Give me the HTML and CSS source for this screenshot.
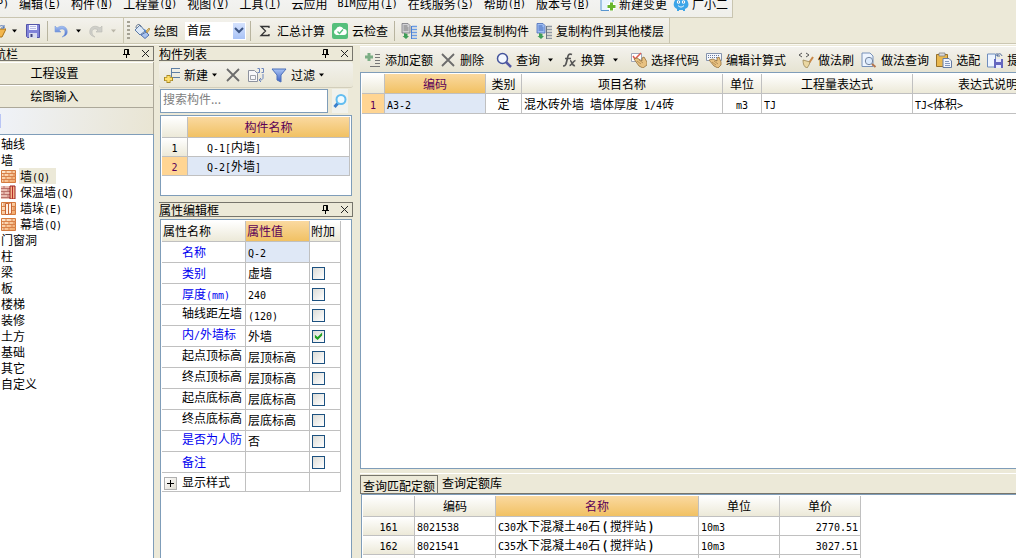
FILE: index.html
```html
<!DOCTYPE html>
<html lang="zh-CN">
<head>
<meta charset="utf-8">
<title>构件定义</title>
<link rel="stylesheet" href="styles.css">
</head>
<body>
<svg class="defs" aria-hidden="true">
  <defs>
    <linearGradient id="gBlue" x1="0" y1="0" x2="0" y2="1"><stop offset="0" stop-color="#a9c4f5"/><stop offset="1" stop-color="#3d62c4"/></linearGradient>
    <linearGradient id="gBrick" x1="0" y1="0" x2="1" y2="1"><stop offset="0" stop-color="#fff0dc"/><stop offset="1" stop-color="#f2a563"/></linearGradient>
    <symbol id="caret" viewBox="0 0 7 4"><path d="M1 0.500h5L3.500 3.500z" fill="currentColor"/></symbol>
    <symbol id="folder" viewBox="9 0 6 16"><path d="M0 14L5 6h10l-4 8z" fill="#f3b64c" stroke="#a87216"/><path d="M8 4c2-2 4-2 5 1m0-3v3h-3" fill="none" stroke="#4f74b8"/></symbol>
    <symbol id="save" viewBox="0 0 16 16"><path d="M1.500 1.500h13v13h-12l-1-1z" fill="#8183d8" stroke="#5355a8"/><path d="M4 2h8v5H4z" fill="#f4f5ff"/><path d="M5 3.500h6M5 5.500h6" stroke="#b7bbe2"/><path d="M4 10h8v5H4z" fill="#d9dcf0"/><path d="M5.500 11h2v3h-2z" fill="#40427c"/></symbol>
    <symbol id="undo" viewBox="0 0 14 16"><path d="M1 3v6h6L5 7c3-2 6-1 6 2 0 2-1 4-3 5 4-1 6-3 5-7-1-4-6-5-10-2z" fill="url(#gBlue)" stroke="#7d9fdc" stroke-width=".6"/></symbol>
    <symbol id="redo" viewBox="0 0 14 16"><path d="M13 3v6H7l2-2C6 5 3 6 3 9c0 2 1 4 3 5-4-1-6-3-5-7 1-4 6-5 10-2z" fill="#cfcfc9" stroke="#b8b8b2" stroke-width=".6"/></symbol>
    <symbol id="paint" viewBox="0 0 16 16"><path d="M1 7l5-5 5 6-5 4z" fill="#dce8f6" stroke="#5b7ba8"/><path d="M2 5c0-4 4-5 5-1" fill="none" stroke="#63748e"/><path d="M10 7c2 0 2 3 2 5" stroke="#4a83d0" stroke-width="1.500" fill="none"/><path d="M7 12l5-3 3 3-4 3.500z" fill="#a8c3ee" stroke="#5272b0"/><path d="M12 8l3-3 1 1-3 4z" fill="#e4bd65" stroke="#9a7c37" stroke-width=".6"/></symbol>
    <symbol id="sigma" viewBox="0 0 16 16"><path d="M12 5V3.500H4L8.500 8 4 12.500h8V11" fill="none" stroke="#333" stroke-width="1.300"/></symbol>
    <symbol id="cloud" viewBox="0 0 16 16"><rect width="16" height="16" rx="2" fill="#55bf7b"/><path d="M4.500 12a3 3 0 0 1-.5-5.800A4 4 0 0 1 11.500 6a3 3 0 0 1 .5 6z" fill="#fff"/><path d="M5.500 8.500l2 2 3.500-4" stroke="#55bf7b" stroke-width="1.300" fill="none"/></symbol>
    <symbol id="copyfrom" viewBox="0 0 16 16"><path d="M1 .5h6l2 2V10H1z" fill="#d3d3d6" stroke="#77777d" stroke-width=".8"/><path d="M2.500 3h4m-4 2h5m-5 2h5" stroke="#777"/><path d="M10.500 3v13" stroke="#4b7fd4"/><path d="M11 3.500h5m-5 3h5m-5 3h5m-5 3h5m-5 3h5" stroke="#6b9ce4" stroke-width="1.500"/><path d="M3 10v3H1.500L5 16l3-3H6.500v-2z" fill="#3f9e58"/></symbol>
    <symbol id="copyto" viewBox="0 0 16 16"><path d="M1 .5h6l2 2V10H1z" fill="#9ebdf2" stroke="#496cb8" stroke-width=".8"/><path d="M2.500 3h4m-4 2h5m-5 2h5" stroke="#4168ba"/><path d="M10.500 3v13" stroke="#6c7580"/><path d="M11 3.500h5m-5 3h5m-5 3h5m-5 3h5m-5 3h5" stroke="#8f98a3" stroke-width="1.500"/><path d="M3 10v3H1.500L5 16l3-3H6.500v-2z" fill="#3f9e58"/></symbol>
    <symbol id="newdoc" viewBox="0 0 16 16"><path d="M1 0h12v14.500H1z" fill="#e8f3fd" stroke="#5996cf"/><path d="M7 10.500h9M11.500 6v9" stroke="#fff" stroke-width="5"/><path d="M7.500 10.500h8M11.500 6.500v8" stroke="#67b52d" stroke-width="3"/></symbol>
    <symbol id="mascot" viewBox="0 0 16 16"><path d="M2 4L1 0l4 2h6l4-2-1 4c3 5 1 8-2 9v2h-2v-1H6v1H4v-2C0 11 0 8 2 4z" fill="#3da5e8"/><circle cx="5.500" cy="6" r="1.700" fill="#fff"/><circle cx="10.500" cy="6" r="1.700" fill="#fff"/><path d="M5.500 5.500v1m5-1v1" stroke="#124b80"/><path d="M5 9.500c2 2 4 2 6 0" stroke="#fff" fill="none"/></symbol>
    <symbol id="addrow" viewBox="0 0 16 16"><path d="M0 5h8M4 1v8" stroke="#7cae86" stroke-width="3"/><path d="M10 2.500h5m-5 3h5m-5 3h5m-5 3h5m-10 3h10" stroke="#777"/></symbol>
    <symbol id="cross" viewBox="0 0 16 16"><path d="M2 2l12 12M14 2L2 14" stroke="#6c6c6c" stroke-width="1.800"/></symbol>
    <symbol id="find" viewBox="0 0 16 16"><circle cx="6.500" cy="6.500" r="5" fill="#f4f8ff" stroke="#44549c" stroke-width="1.500"/><path d="M10 10l5 5" stroke="#5358a4" stroke-width="2.500"/></symbol>
    <symbol id="fx" viewBox="0 0 16 16"><path d="M11 2.500C7 1 7 4 6 8s-1 6-4 6M4 6.500h6M9 8.500c2 0 2 6 5 5M14.500 8.500c-2 0-4 5-6 5" fill="none" stroke="#555" stroke-width="1.700"/></symbol>
    <symbol id="pick" viewBox="0 0 16 16"><path d="M.5 1.500h10v8H.5z" fill="#fff" stroke="#9fa6b8"/><path d="M2 4l2 3 6-6" fill="none" stroke="#df5c50" stroke-width="1.500"/><path d="M3 7l3-1 5 3V6l2-1 3 5v3l-4 3-4-2z" fill="#e8c181" stroke="#94713e" stroke-width=".8"/><path d="M6 9l4 3M8 8l4 3" stroke="#94713e" stroke-width=".6"/></symbol>
    <symbol id="edit" viewBox="0 0 16 16"><path d="M.5 1.500h15v7H.5z" fill="#f5f8fd" stroke="#8593ad"/><path d="M2 3.500h12M2 5.500h12" stroke="#6879a0" stroke-dasharray="1 1"/><path d="M3 8l4-1 4 2V6l2-1 2 5v3l-3 3-4-2z" fill="#e8c181" stroke="#94713e" stroke-width=".8"/><path d="M6 10l4 3M8 9l4 3" stroke="#94713e" stroke-width=".6"/></symbol>
    <symbol id="brush" viewBox="0 0 16 16"><path d="M4 1L1 3l3 2m4-4l3 2-3 2" fill="none" stroke="#555"/><path d="M15 5l-4 6" stroke="#c98747" stroke-width="2"/><path d="M5 8l7 2-1 3-2 3c-3-1-4-4-4-8z" fill="#ead7a2" stroke="#9b8656" stroke-width=".8"/></symbol>
    <symbol id="docfind" viewBox="0 0 16 16"><path d="M1 1h8l3 3v10.500H1z" fill="#eef5ff" stroke="#7892ba"/><circle cx="8" cy="9" r="3.700" fill="#dceafc" stroke="#74859f"/><path d="M11 12l3.500 3" stroke="#b4744b" stroke-width="2"/></symbol>
    <symbol id="paste" viewBox="0 0 16 16"><path d="M.5 2.500h11v12H.5z" fill="#e9b84f" stroke="#97712a"/><path d="M3 1h6v3H3z" fill="#d9d9d9" stroke="#777" stroke-width=".7"/><path d="M7 6.500h6l2.500 2.500v6.500H7z" fill="#f1f5fd" stroke="#667da3"/><path d="M9 9.500h4m-4 2h5m-5 2h5" stroke="#8398bd"/></symbol>
    <symbol id="extract" viewBox="0 0 16 16"><path d="M.5 2h8v13h-8z" fill="#edf4ff" stroke="#6f8dbd"/><path d="M7 7h9v9H7z" fill="#6467c0"/><path d="M9 7h5v3H9zM9 13h5v3H9z" fill="#e8eaff"/><path d="M10 4c1-3 4-3 5 0m-5-3v3h3" fill="none" stroke="#516b9c"/></symbol>
    <symbol id="newitem" viewBox="0 0 16 16"><path d="M7 1.500h9M7 5.500h9M7 10.500h9M7.500 1v9" stroke="#5d7ea4" fill="none"/><path d="M0 12h9M4.500 8v8" stroke="#a88a26" stroke-width="4"/><path d="M1 12h7M4.500 9v6" stroke="#ffdf6c" stroke-width="2.500"/></symbol>
    <symbol id="copy" viewBox="0 0 16 16"><path d="M.5 3.500h6l3 3v8h-9z" fill="#f8f8fa" stroke="#8d929e"/><path d="M2.500 8.500h5v4h-5z" fill="none" stroke="#a0a3ab"/><path d="M9.500 1.500h2v4h-2m4-4h2v4h-2M15 7v4c0 1-1 2-3 2m1-2l-2 2 2 2" fill="none" stroke="#6d86bd"/></symbol>
    <symbol id="funnel" viewBox="0 0 16 16"><path d="M1 2h14l-5 6v7l-4-2V8z" fill="url(#gBlue)" stroke="#4d71ba"/></symbol>
    <symbol id="lens" viewBox="0 0 16 16"><path d="M6.500 9.500l-4 4.500" stroke="#3b7fcb" stroke-width="3"/><circle cx="9" cy="6.500" r="4.500" fill="#effaff" stroke="#62bdf0" stroke-width="2"/></symbol>
    <symbol id="pin" viewBox="0 0 9 9"><path d="M2.500 5V.5h4V5M1 5.500h7M4.500 6v3" fill="none" stroke="#000"/><path d="M5.800 0v5" stroke="#000" stroke-width="1.500"/></symbol>
    <symbol id="close" viewBox="0 0 9 9"><path d="M1 1l7 7M8 1L1 8" stroke="#222"/></symbol>
    <symbol id="brick" viewBox="0 0 16 14"><path d="M.5 1.500h14v12H.5z" fill="url(#gBrick)" stroke="#d47b3e"/><path d="M1 4.500h14M1 7.500h14M1 10.500h14M5 2v2m6-2v2M8 5v2m-5-2v2m10-2v2M5 8v2m6-2v2M8 11v2m-5-2v2" stroke="#d9824a"/></symbol>
    <symbol id="brick2" viewBox="0 0 16 14"><path d="M0 1h9v13H0z" fill="#e9bcb0"/><path d="M0 3.500h9m-9 3h9m-9 3h9m-9 3h9M3 1v2m4 1v2M3 7v2m4 1v2" stroke="#b9726b"/><path d="M9 1h5v13H9z" fill="#f5b68b" stroke="#982020"/><path d="M11.500 1v13" stroke="#b52b2b"/></symbol>
    <symbol id="brick3" viewBox="0 0 16 14"><path d="M.5 1.500h14v12H.5z" fill="url(#gBrick)" stroke="#d47b3e"/><path d="M1 5.500h3m-3 4h3m7-4h4m-4 4h4M3 2v3m10 1v3" stroke="#d9824a"/><path d="M4.500 2.500h3v11h-3zM7.500 2.500l3-1v11l-3 1" fill="#fff1e4" stroke="#c86432"/></symbol>
  </defs>
</svg>

<div class="app">
  <nav class="menu" aria-label="主菜单">
    <button class="cut"><i>P)</i></button>
    <button>编辑<i>(<u>E</u>)</i></button>
    <button>构件<i>(<u>N</u>)</i></button>
    <button>工程量<i>(<u>Q</u>)</i></button>
    <button>视图<i>(<u>V</u>)</i></button>
    <button>工具<i>(<u>T</u>)</i></button>
    <button>云应用</button>
    <button><i>BIM</i>应用<i>(<u>I</u>)</i></button>
    <button>在线服务<i>(<u>S</u>)</i></button>
    <button>帮助<i>(<u>H</u>)</i></button>
    <button>版本号<i>(<u>B</u>)</i></button>
    <button class="pic"><svg class="ic"><use href="#newdoc"/></svg>新建变更</button>
    <button class="pic user"><svg class="ic"><use href="#mascot"/></svg>广小二</button>
  </nav>

  <div class="bars">
    <div class="bar quick">
      <button aria-label="打开"><svg class="ic sliver"><use href="#folder"/></svg><svg class="caret"><use href="#caret"/></svg></button>
      <button aria-label="保存"><svg class="ic"><use href="#save"/></svg></button>
      <span class="sep"></span>
      <button aria-label="撤销"><svg class="ic narrow"><use href="#undo"/></svg><svg class="caret"><use href="#caret"/></svg></button>
      <button aria-label="恢复" disabled><svg class="ic narrow"><use href="#redo"/></svg><svg class="caret"><use href="#caret"/></svg></button>
    </div>
    <div class="bar tools">
      <span class="grip"></span>
      <button><svg class="ic"><use href="#paint"/></svg>绘图</button>
      <span class="floor"><select aria-label="楼层"><option>首层</option></select></span>
      <span class="sep"></span>
      <button><svg class="ic"><use href="#sigma"/></svg>汇总计算</button>
      <button><svg class="ic"><use href="#cloud"/></svg>云检查</button>
      <span class="sep"></span>
      <button><svg class="ic"><use href="#copyfrom"/></svg>从其他楼层复制构件</button>
      <button><svg class="ic"><use href="#copyto"/></svg>复制构件到其他楼层</button>
    </div>
  </div>

  <main class="work">
    <aside class="side">
      <header class="title"><h2 class="clipped">航栏</h2><button aria-label="固定"><svg><use href="#pin"/></svg></button><button aria-label="关闭"><svg><use href="#close"/></svg></button></header>
      <button class="wide">工程设置</button>
      <button class="wide">绘图输入</button>
      <div class="strip"><span></span></div>
      <ul class="tree">
        <li>轴线</li>
        <li>墙
          <ul>
            <li><svg class="bk"><use href="#brick"/></svg><span class="on">墙<i>(Q)</i></span></li>
            <li><svg class="bk"><use href="#brick2"/></svg><span>保温墙<i>(Q)</i></span></li>
            <li><svg class="bk"><use href="#brick3"/></svg><span>墙垛<i>(E)</i></span></li>
            <li><svg class="bk"><use href="#brick"/></svg><span>幕墙<i>(Q)</i></span></li>
          </ul>
        </li>
        <li>门窗洞</li><li>柱</li><li>梁</li><li>板</li><li>楼梯</li><li>装修</li><li>土方</li><li>基础</li><li>其它</li><li>自定义</li>
      </ul>
    </aside>

    <section class="mid">
      <header class="title"><h2>构件列表</h2><button aria-label="固定"><svg><use href="#pin"/></svg></button><button aria-label="关闭"><svg><use href="#close"/></svg></button></header>
      <div class="bar list-tools">
        <button class="tight"><svg class="ic"><use href="#newitem"/></svg>新建<svg class="caret"><use href="#caret"/></svg></button>
        <button aria-label="删除"><svg class="ic"><use href="#cross"/></svg></button>
        <button aria-label="复制"><svg class="ic"><use href="#copy"/></svg></button>
        <button class="tight"><svg class="ic"><use href="#funnel"/></svg>过滤<svg class="caret"><use href="#caret"/></svg></button>
      </div>
      <div class="search"><input type="text" placeholder="搜索构件..." aria-label="搜索构件"><button aria-label="搜索"><svg class="ic"><use href="#lens"/></svg></button></div>
      <div class="frame parts">
        <table>
          <colgroup><col class="c26"><col></colgroup>
          <tr><th></th><th class="gold">构件名称</th></tr>
          <tr><th><i>1</i></th><td class="inset"><i>Q-1[</i>内墙<i>]</i></td></tr>
          <tr><th class="cur"><i>2</i></th><td class="inset sel"><i>Q-2[</i>外墙<i>]</i></td></tr>
        </table>
      </div>
      <header class="title"><h2>属性编辑框</h2><button aria-label="固定"><svg><use href="#pin"/></svg></button><button aria-label="关闭"><svg><use href="#close"/></svg></button></header>
      <div class="frame props">
        <table>
          <colgroup><col class="c84"><col class="c64"><col class="c31"></colgroup>
          <tr><th>属性名称</th><th class="gold">属性值</th><th>附加</th></tr>
          <tr><td class="key">名称</td><td class="sel"><i>Q-2</i></td><td></td></tr>
          <tr><td class="key">类别</td><td>虚墙</td><td><input type="checkbox" aria-label="类别"></td></tr>
          <tr><td class="key">厚度<i>(mm)</i></td><td><i>240</i></td><td><input type="checkbox" aria-label="厚度"></td></tr>
          <tr><td class="key dark full">轴线距左墙</td><td><i>(120)</i></td><td><input type="checkbox" aria-label="轴线距左墙"></td></tr>
          <tr><td class="key full">内<i>/</i>外墙标</td><td>外墙</td><td><input type="checkbox" checked aria-label="内/外墙标"></td></tr>
          <tr><td class="key dark full">起点顶标高</td><td>层顶标高</td><td><input type="checkbox" aria-label="起点顶标高"></td></tr>
          <tr><td class="key dark full">终点顶标高</td><td>层顶标高</td><td><input type="checkbox" aria-label="终点顶标高"></td></tr>
          <tr><td class="key dark full">起点底标高</td><td>层底标高</td><td><input type="checkbox" aria-label="起点底标高"></td></tr>
          <tr><td class="key dark full">终点底标高</td><td>层底标高</td><td><input type="checkbox" aria-label="终点底标高"></td></tr>
          <tr><td class="key full">是否为人防</td><td>否</td><td><input type="checkbox" aria-label="是否为人防"></td></tr>
          <tr><td class="key">备注</td><td></td><td><input type="checkbox" aria-label="备注"></td></tr>
          <tr class="last"><td class="group"><button aria-label="展开"></button>显示样式</td><td></td><td></td></tr>
        </table>
      </div>
    </section>

    <section class="right">
      <div class="bar quota-tools">
        <button><svg class="ic"><use href="#addrow"/></svg>添加定额</button>
        <button><svg class="ic"><use href="#cross"/></svg>删除</button>
        <span class="sep"></span>
        <button><svg class="ic"><use href="#find"/></svg>查询<svg class="caret"><use href="#caret"/></svg></button>
        <button><svg class="ic"><use href="#fx"/></svg>换算<svg class="caret"><use href="#caret"/></svg></button>
        <span class="sep"></span>
        <button><svg class="ic"><use href="#pick"/></svg>选择代码</button>
        <button><svg class="ic"><use href="#edit"/></svg>编辑计算式</button>
        <span class="sep"></span>
        <button><svg class="ic"><use href="#brush"/></svg>做法刷</button>
        <button><svg class="ic"><use href="#docfind"/></svg>做法查询</button>
        <button><svg class="ic"><use href="#paste"/></svg>选配</button>
        <button><svg class="ic"><use href="#extract"/></svg>提取做法</button>
      </div>
      <div class="frame quota">
        <table>
          <colgroup><col class="c23"><col class="c101"><col class="c36"><col class="c201"><col class="c39"><col class="c151"><col class="c151"></colgroup>
          <tr><th></th><th class="gold">编码</th><th>类别</th><th>项目名称</th><th>单位</th><th>工程量表达式</th><th>表达式说明</th></tr>
          <tr><th class="cur"><i>1</i></th><td class="sel"><i>A3-2</i></td><td class="mid-text">定</td><td>混水砖外墙<i> </i>墙体厚度<i> 1/4</i>砖</td><td class="mid-text"><i>m3</i></td><td><i>TJ</i></td><td><i>TJ&lt;</i>体积<i>&gt;</i></td></tr>
        </table>
      </div>
      <div class="tabs" role="tablist"><button role="tab" aria-selected="true">查询匹配定额</button><button role="tab" aria-selected="false">查询定额库</button></div>
      <div class="frame match">
        <table>
          <colgroup><col class="c52"><col class="c81"><col class="c203"><col class="c81"><col class="c81"></colgroup>
          <tr><th></th><th>编码</th><th class="gold">名称</th><th>单位</th><th>单价</th></tr>
          <tr><th><i>161</i></th><td><i>8021538</i></td><td><i>C30</i>水下混凝土<i>40</i>石 <b>(</b> 搅拌站 <b>)</b></td><td><i>10m3</i></td><td class="num"><i>2770.51</i></td></tr>
          <tr><th><i>162</i></th><td><i>8021541</i></td><td><i>C35</i>水下混凝土<i>40</i>石 <b>(</b> 搅拌站 <b>)</b></td><td><i>10m3</i></td><td class="num"><i>3027.51</i></td></tr>
          <tr><th></th><td></td><td></td><td></td><td></td></tr>
        </table>
      </div>
    </section>
  </main>
</div>
</body>
</html>
```
FILE: styles.css
```css
* { box-sizing: border-box; }
body {
  margin: 0;
  background: #ece9d8;
  color: #000;
  font: 12px/16px "Noto Sans CJK SC", sans-serif;
  white-space: nowrap;
}
button, input, select { font: inherit; color: inherit; }
button {
  border: 0;
  padding: 0;
  background: none;
  display: flex;
  align-items: center;
}
i { font: 10px/12px "DejaVu Sans Mono", monospace; white-space: pre; }
b { font-size: 12px; }
svg { display: block; flex: none; }
.defs { position: absolute; width: 0; height: 0; }
.ic { width: 16px; height: 16px; }
.ic.narrow { width: 14px; }
.ic.sliver { width: 6px; }
.caret { width: 7px; height: 4px; }

.app { display: flex; flex-direction: column; height: 100vh; overflow: hidden; }

/* menu */
.menu {
  display: flex;
  align-items: flex-end;
  align-self: flex-start;
  gap: 10px;
  height: 18px;
  padding: 0 4px 5px 0;
  background: linear-gradient(#f3f3f1, #efefea);
  border: solid #c9c5b0;
  border-width: 0 1px 1px 0;
}
.menu .cut { width: 9px; justify-content: flex-end; height: 16px; }
.menu .pic { gap: 3px; }
.menu .user { margin-left: -4px; }

/* toolbars */
.bars { display: flex; height: 26px; border-bottom: 1px solid #cbc7b2; }
.bar { display: flex; align-items: center; gap: 1px; }
.bar button { gap: 4px; padding: 0 3px; }
.bar .caret { margin-left: 3px; }
.bar .tight .caret { margin-left: -1px; }
.bars .bar { background: linear-gradient(#f3f2ed, #e9e6d6); border-right: 1px solid #c9c5b0; }
.bars .quick { gap: 5px; padding-right: 5px; }
.bars .quick button { padding: 0 1px; }
.bars .quick button:first-child { padding-left: 0; gap: 2px; }
.bar button:disabled { color: #b9b6a8; }
.tools { padding: 0 2px 0 3px; }
.sep { width: 1px; height: 20px; margin: 0 2px; background: #b8b49f; }
.quick .sep { margin: 0; }
.grip {
  width: 3px;
  height: 20px;
  background: repeating-linear-gradient(#a5a294 0 2px, transparent 2px 4px);
}
.floor { display: flex; margin: 0 1px 0 3px; }
.floor select {
  appearance: none;
  width: 61px;
  height: 18px;
  border: 0;
  border-radius: 0;
  padding: 0 2px 2px;
  background:
    url("data:image/svg+xml,%3Csvg xmlns='http://www.w3.org/2000/svg' width='10' height='7'%3E%3Cpath d='M1 1l4 4 4-4' fill='none' stroke='%233d5685' stroke-width='2'/%3E%3C/svg%3E") right 2px center no-repeat,
    linear-gradient(#d5e2fd, #a9c3f6) right 1px top 1px / 12px 16px no-repeat,
    #fff;
}

/* work area */
.work { flex: 1; display: flex; gap: 5px; min-height: 0; padding-top: 1px; border-top: 1px solid #faf9f3; }
.side { flex: 0 0 154px; display: flex; flex-direction: column; }
.mid { flex: 0 0 196px; display: flex; flex-direction: column; padding-right: 2px; }
.right { flex: 1; min-width: 0; display: flex; flex-direction: column; border-top: 1px solid #fff; }

.title {
  display: flex;
  align-items: center;
  gap: 10px;
  flex: 0 0 15px;
  border: solid #77756c;
  border-width: 1px 1px 1px 0;
  padding-right: 3px;
}
.title h2 { flex: 1; margin: 0; font: inherit; line-height: 12px; }
.title .clipped { margin-left: -6px; }
.title svg { width: 9px; height: 9px; }

.wide {
  justify-content: center;
  height: 23px;
  padding-right: 44px;
  border: solid #aca899;
  border-width: 0 1px 1px 0;
  box-shadow: inset 0 1px #fff;
}
.side .title { margin-bottom: 1px; }
.strip { height: 26px; padding: 6px 0; background: linear-gradient(100deg, #eff2f8, #e9e5d3); border-right: 1px solid #aca899; }
.strip span { display: block; width: 1px; height: 14px; background: #b9c5f5; }
.tree {
  flex: 1;
  margin: 0;
  padding: 1px 0 0 1px;
  list-style: none;
  background: #fff;
  border: solid #7f9db9;
  border-width: 1px 1px 0 0;
}
.tree ul { margin: 0; padding: 0; list-style: none; }
.tree ul li { display: flex; align-items: center; gap: 2px; height: 16px; }
.tree .bk { width: 16px; height: 14px; }
.tree li span { padding: 0 6px 0 1px; }
.tree .on { background: #ece9d8; }

.list-tools { height: 26px; padding-left: 2px; margin: 1px 0; background: linear-gradient(#f3f2ed, #e9e6d6); border-radius: 3px; border-bottom: 1px solid #d2cebb; }
.search { display: flex; height: 24px; gap: 4px; margin-left: 1px; }
.search input { width: 168px; padding: 0 0 4px 2px; border: 1px solid #7f9db9; background: #fff; }
.search input::placeholder { color: #808080; opacity: 1; }
.search button { background: #f1f2ed; }

.frame { background: #fff; border: 1px solid #7f9db9; padding: 1px 0 0 1px; overflow: hidden; }
.parts { height: 81px; margin: 2px 1px 6px 1px; padding-right: 1px; }
.props { flex: 1; margin: 2px 1px 0 1px; border-bottom: 0; }

/* tables */
table { border-collapse: separate; border-spacing: 0; table-layout: fixed; width: 0; }
.parts table { width: 100%; }
th, td {
  height: 19px;
  padding: 0 2px;
  border: solid #c0c0c0;
  border-width: 0 1px 1px 0;
  line-height: 16px;
  font-weight: normal;
  text-align: left;
}
th { background: linear-gradient(#fff, #ece9d8); text-align: center; }
tr:first-child th { height: 21px; }
.quota tr:first-child th { height: 20px; }
.quota td, .quota tr + tr th { height: 20px; }
th.gold { background: linear-gradient(#fad9a0, #f1c163); color: #5b0058; }
th.cur { background: #ffd593; color: #5b0058; }
td.sel { background: #dfe8f6; }
td.inset { padding-left: 19px; }
td.mid-text { text-align: center; }
td.num { text-align: right; }
.c23 { width: 23px; }
.c26 { width: 26px; }
.c31 { width: 31px; }
.c36 { width: 36px; }
.c39 { width: 39px; }
.c52 { width: 52px; }
.c64 { width: 64px; }
.c81 { width: 81px; }
.c84 { width: 84px; }
.c101 { width: 101px; }
.c151 { width: 151px; }
.c201 { width: 201px; }
.c203 { width: 203px; }

.props th { text-align: left; padding: 0 1px; }
.props td { height: 21px; }
.props td.key { padding-left: 20px; color: #0000f0; }
.props td.dark { color: #000; }
.props td.full { vertical-align: top; padding-right: 0; }
.props .last td { height: 19px; }
.props input {
  appearance: none;
  display: block;
  width: 13px;
  height: 13px;
  margin: 0;
  border: 1px solid #1c5180;
  background: linear-gradient(135deg, #dcdcd7, #fff);
}
.props input:checked::after {
  content: "";
  display: block;
  width: 9px;
  height: 9px;
  margin: 1px;
  background: #21a121;
  clip-path: polygon(10% 35%, 40% 60%, 90% 10%, 90% 45%, 40% 95%, 10% 70%);
}
.props .group { padding-left: 2px; }
.group button {
  display: inline-block;
  vertical-align: middle;
  width: 13px;
  height: 13px;
  margin-right: 5px;
  border: 1px solid #b0b0b0;
  background:
    linear-gradient(#000, #000) center / 7px 1px no-repeat,
    linear-gradient(#000, #000) center / 1px 7px no-repeat,
    linear-gradient(135deg, #fff, #dedbd0);
}

.quota-tools { height: 25px; padding-left: 2px; background: linear-gradient(#f3f2ed, #e6e3d2); overflow: hidden; }
.quota-tools button { flex: none; }
.quota { flex: 1; min-height: 0; border-right: 0; }
.tabs { display: flex; gap: 1px; height: 25px; padding-top: 6px; border-bottom: 1px solid #77756c; background: linear-gradient(#ece9d8 4px, #fff 4px 5px, #ece9d8 5px); }
.tabs button { padding: 0 3px; }
.tabs [aria-selected="true"] { border: solid #77756c; border-width: 1px 1px 0 1px; padding: 2px 2px 0; }
.tabs [aria-selected="false"] { padding-bottom: 3px; }
.match { flex: 0 0 64px; margin-left: 1px; border-bottom: 0; border-right: 0; }
```
